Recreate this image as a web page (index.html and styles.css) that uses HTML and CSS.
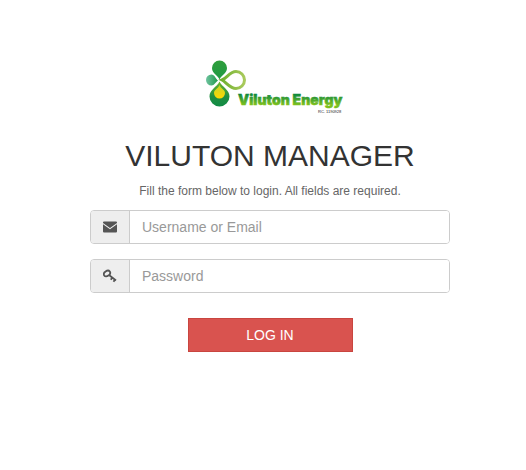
FILE: index.html
```html
<!DOCTYPE html>
<html lang="en">
<head>
<meta charset="utf-8">
<title>Viluton Manager</title>
<link rel="stylesheet" href="styles.css">
</head>
<body>
<main class="login">
  <svg class="logo" viewBox="-12 0 152 60" role="img" aria-label="Viluton Energy">
    <defs>
      <linearGradient id="leaf" x1="0" y1="0" x2="0" y2="1"><stop offset="0" stop-color="#2f9e3c"/><stop offset="1" stop-color="#1f9a45"/></linearGradient>
      <linearGradient id="side" x1="0" y1="0" x2="1" y2="0"><stop offset="0" stop-color="#6fc3a0"/><stop offset="1" stop-color="#1f9a4a"/></linearGradient>
      <linearGradient id="drop" x1="0" y1="0" x2="0" y2="1"><stop offset="0" stop-color="#6fb52c"/><stop offset="0.600" stop-color="#1f9040"/><stop offset="1" stop-color="#118a45"/></linearGradient>
      <linearGradient id="ring" x1="0" y1="0" x2="1" y2="0"><stop offset="0" stop-color="#6fb02e"/><stop offset="1" stop-color="#a9ca5c"/></linearGradient>
      <linearGradient id="sun" x1="0" y1="0" x2="0" y2="1"><stop offset="0" stop-color="#c5d52c"/><stop offset="1" stop-color="#ffd800"/></linearGradient>
      <linearGradient id="word" x1="0" y1="0" x2="0" y2="1"><stop offset="0.200" stop-color="#118a3c"/><stop offset="0.800" stop-color="#7cc01e"/></linearGradient>
    </defs>
    <path fill="url(#leaf)" d="M13.500 19.500C12 15.500 6 13.500 6 8a7.500 7.500 0 0 1 15 0C21 13.500 15 15.500 13.500 19.500z"/>
    <path fill="url(#side)" d="M12 20.500C9.500 22 8.500 25.500 5.500 25.500a5.500 5.500 0 0 1 0-11C8.500 14.500 9.500 18.500 12 20.500z"/>
    <path fill="none" stroke="url(#ring)" stroke-width="3" d="M16 20c5-2 8-8.500 14-8.500a8.500 8.500 0 0 1 0 17C24 28.500 20 22 16 20z"/>
    <path fill="url(#drop)" d="M13.500 21.500C16 27 23.500 29.500 23.500 36.500a10 10 0 0 1-20 0C3.500 29.500 11 27 13.500 21.500z"/>
    <path fill="url(#sun)" d="M13.500 25c1.500 4 5.500 4.500 5.500 8a5.500 5.500 0 0 1-11 0C8 29.500 12 29 13.500 25z"/>
    <text class="logo-name" x="32" y="45">Viluton Energy</text>
    <text class="logo-code" x="112" y="53">RC. 1190928</text>
  </svg>
  <h1 class="title">VILUTON MANAGER</h1>
  <p class="hint">Fill the form below to login. All fields are required.</p>
  <form class="form">
    <div class="field">
      <label class="addon" for="user" aria-label="Username or Email">
        <svg class="icon" viewBox="0 0 14 14"><path d="M0 2.500a1 1 0 0 1 1-1h12a1 1 0 0 1 1 1v.5L7 8 0 3z"/><path d="M0 4.300L7 9.300l7-5v7.200a1 1 0 0 1-1 1H1a1 1 0 0 1-1-1z"/></svg>
      </label>
      <input class="input" id="user" type="text" placeholder="Username or Email">
    </div>
    <div class="field">
      <label class="addon" for="pass" aria-label="Password">
        <svg class="icon" viewBox="0 0 14 14"><g fill="none" stroke="#555" stroke-width="1.800"><ellipse cx="4" cy="4.500" rx="3.400" ry="2.500" transform="rotate(-35 4 4.500)"/><path d="M6 6l7 5.500M9.300 8.500L7.800 10.700M12 10.500l-1.500 2.300"/></g></svg>
      </label>
      <input class="input" id="pass" type="password" placeholder="Password">
    </div>
    <button class="submit" type="submit">LOG IN</button>
  </form>
</main>
</body>
</html>
```

FILE: styles.css
```css
* {
  box-sizing: border-box;
}

body {
  margin: 0;
  background: #fff;
  color: #333;
  font: 14px/20px "Liberation Sans", Arial, sans-serif;
}

.login {
  display: flex;
  flex-direction: column;
  align-items: center;
  padding: 60px 76px 40px 90px;
}

.logo {
  width: 152px;
  height: 60px;
}

.logo-name {
  font: 900 14px "Inter", sans-serif;
  fill: url(#word);
  stroke: url(#word);
  stroke-width: 0.5px;
}

.logo-code {
  font: 4px "Liberation Sans", Arial, sans-serif;
  fill: #222;
}

.title {
  margin: 18px 0 0;
  font-size: 30px;
  line-height: 36px;
  font-weight: 400;
  white-space: nowrap;
}

.hint {
  margin: 7px 0 9px;
  font-size: 12px;
  line-height: 20px;
  color: #666;
}

.form {
  display: flex;
  flex-direction: column;
  align-items: center;
  width: 100%;
}

.field {
  display: flex;
  width: 100%;
  height: 34px;
  margin-bottom: 15px;
  border: 1px solid #ccc;
  border-radius: 4px;
  overflow: hidden;
}

.addon {
  display: flex;
  align-items: center;
  justify-content: center;
  width: 39px;
  background: #eee;
  border-right: 1px solid #ccc;
}

.icon {
  width: 14px;
  height: 14px;
  fill: #555;
}

.input {
  flex: 1;
  min-width: 0;
  padding: 6px 12px;
  border: 0;
  background: #fff;
  color: #555;
  font: inherit;
}

.input::placeholder {
  color: #999;
  opacity: 1;
}

.submit {
  width: 165px;
  height: 34px;
  margin-top: 10px;
  border: 1px solid #c9453f;
  background: #d9534f;
  color: #fff;
  font: inherit;
}
```
